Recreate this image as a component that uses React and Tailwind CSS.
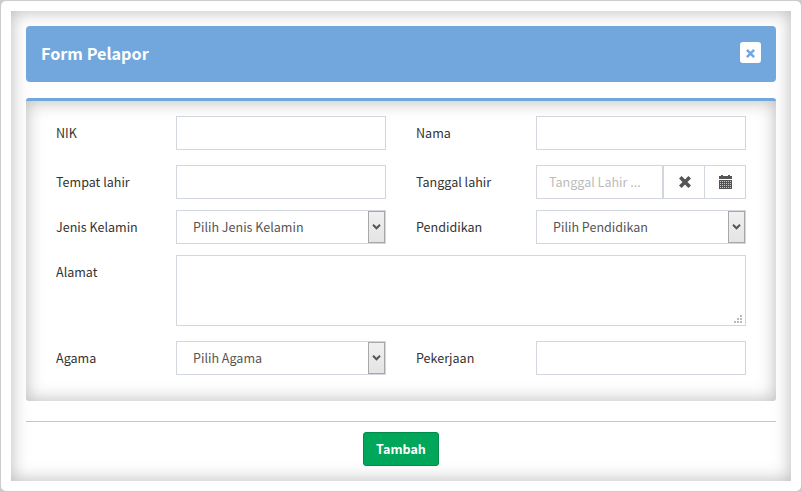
const field = "h-[34px] w-[210px] border border-[#d2d6de] bg-white";

function Label({ children }) {
  return <label className="w-[120px] shrink-0 pt-[7px] leading-5 text-[#333]">{children}</label>;
}

function TextField() {
  return <input className={field + " block px-3 outline-none"} />;
}

function SelectField({ children }) {
  return (
    <div className={field + " flex items-center justify-between pl-4 text-[#555]"}>
      <span className="leading-5">{children}</span>
      <span className="flex h-8 w-[17px] items-center justify-center border border-[#a8a8a8] bg-linear-to-b from-[#f0f0f0] to-[#e4e4e4]">
        <svg width="9" height="6" viewBox="0 0 9 6" fill="none" stroke="#555" strokeWidth="2">
          <path d="M1 0.8 L4.5 4.3 L8 0.8" />
        </svg>
      </span>
    </div>
  );
}

function DateField() {
  return (
    <div className="flex h-[34px] w-[210px] border border-[#d2d6de] bg-white">
      <input
        placeholder="Tanggal Lahir ..."
        className="w-[126px] border-r border-[#d2d6de] px-3 leading-5 outline-none placeholder:text-[#bbb]"
      />
      <span className="flex w-[42px] items-center justify-center border-x border-[#d2d6de] pl-[2px]">
        <svg width="12" height="12" viewBox="0 0 12 12" stroke="#555" strokeWidth="3.6">
          <path d="M1.3 1.3 L10.7 10.7 M10.7 1.3 L1.3 10.7" />
        </svg>
      </span>
      <span className="flex flex-1 items-center justify-center pl-[2px]">
        <svg width="14" height="14" viewBox="0 0 14 14" fill="#555">
          <path d="M0 1h2V0h2v1h5V0h2v1h2v3H0z" />
          <path d="M0 5h13v9H0z" />
          <path
            d="M1 6.5h11M1 8.5h11M1 10.5h11M1 12.5h11"
            stroke="#c4c4c4"
            strokeWidth="1"
            strokeDasharray="1 1"
          />
        </svg>
      </span>
    </div>
  );
}

function Row({ left, right, leftField, rightField, className = "" }) {
  return (
    <div className={"flex " + className}>
      <Label>{left}</Label>
      {leftField}
      <div className="ml-[30px] flex">
        <Label>{right}</Label>
        {rightField}
      </div>
    </div>
  );
}

export default function App() {
  return (
    <div className="h-[492px] w-[802px] overflow-hidden bg-[#ccc] p-px font-['Noto_Sans_CJK_SC',sans-serif] text-[12.55px]">
      <div className="h-[490px] w-[800px] rounded-[5px] bg-white p-2.5">
        <div className="h-[470px] p-[15px] shadow-[inset_0_0_18px_#b8b8b8]">
          <header className="flex h-14 items-center justify-between rounded-[4px] bg-[#72a7de] px-[15px]">
            <h1 className="mb-[2px] text-[16.2px] leading-6 font-bold text-white">Form Pelapor</h1>
            <button className="mb-[3px] flex h-[21px] w-[21px] items-center justify-center rounded-[3px] bg-white">
              <svg width="9" height="9" viewBox="0 0 9 9" stroke="#72a7de" strokeWidth="2.5" className="mt-[2px]">
                <path d="M0.9 0.9 L8.1 8.1 M8.1 0.9 L0.9 8.1" />
              </svg>
            </button>
          </header>

          <section className="mt-4 h-[303px] rounded-[3px] border-t-[3px] border-[#72a7de] px-[30px] pt-[15px] shadow-[inset_0_0_18px_#b8b8b8]">
            <Row left="NIK" leftField={<TextField />} right="Nama" rightField={<TextField />} />
            <Row
              className="mt-[15px]"
              left="Tempat lahir"
              leftField={<TextField />}
              right="Tanggal lahir"
              rightField={<DateField />}
            />
            <Row
              className="mt-[11px]"
              left="Jenis Kelamin"
              leftField={<SelectField>Pilih Jenis Kelamin</SelectField>}
              right="Pendidikan"
              rightField={<SelectField>Pilih Pendidikan</SelectField>}
            />
            <div className="mt-[11px] flex">
              <Label>Alamat</Label>
              <div className="flex h-[71px] w-[570px] items-end justify-end border border-[#d2d6de] bg-white pr-[3px] pb-[2px]">
                <svg width="8" height="8" viewBox="0 0 8 8" fill="#bbb">
                  <path d="M6 0h2v2H6zM3 3h2v2H3zM6 3h2v2H6zM0 6h2v2H0zM3 6h2v2H3zM6 6h2v2H6z" />
                </svg>
              </div>
            </div>
            <Row
              className="mt-[15px]"
              left="Agama"
              leftField={<SelectField>Pilih Agama</SelectField>}
              right="Pekerjaan"
              rightField={<TextField />}
            />
          </section>

          <footer className="mt-5 flex justify-center border-t border-[#c6c6c6] pt-[10px]">
            <button className="h-[34px] w-[76px] rounded-[3px] border border-[#008d4c] bg-[#00a65a] leading-5 font-bold text-white">
              Tambah
            </button>
          </footer>
        </div>
      </div>
    </div>
  );
}
